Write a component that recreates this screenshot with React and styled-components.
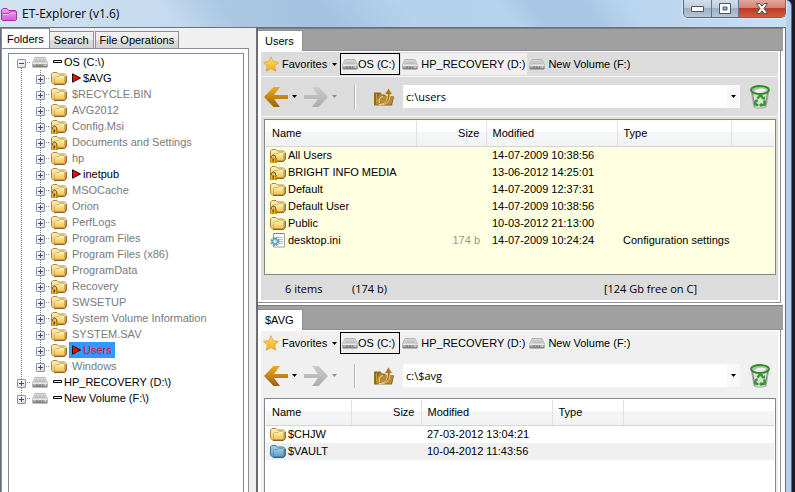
import { useState } from "react";
import styled, { createGlobalStyle, css } from "styled-components";

const GlobalStyle = createGlobalStyle`
  * {
    box-sizing: border-box;
  }

  body {
    margin: 0;
    background: #1b1a2c;
    font-family: "Liberation Sans", Arial, sans-serif;
    font-size: 11px;
    color: #000;
  }

  button, input {
    font: inherit;
    color: inherit;
    border: none;
    padding: 0;
    margin: 0;
    background: none;
  }

  svg {
    display: block;
    flex-shrink: 0;
  }

  ul {
    list-style: none;
    margin: 0;
    padding: 0;
  }
`;

const StyledWindow = styled.div`
  display: flex;
  flex-direction: column;
  height: 100vh;
  margin-right: 3px;
  padding-right: 5px;
  border-top-right-radius: 6px;
  background: #b4d0ea;
  border-right: 1px solid #5c6a7a;
`;

const StyledTitleBar = styled.header`
  display: flex;
  align-items: flex-start;
  justify-content: space-between;
  height: 27px;
  flex-shrink: 0;
  background:
    linear-gradient(50deg, transparent 0 22%, rgba(150, 182, 214, 0.5) 30% 42%, transparent 52% 64%, rgba(150, 182, 214, 0.4) 68% 74%, transparent 80%),
    linear-gradient(90deg, #d3e3f2 0, #c6dbef 20%, #b5d1ed 40%, #b5d2ee 75%, #c9def2 100%);

  h1 {
    display: flex;
    align-items: center;
    gap: 5px;
    margin: 0;
    padding-left: 1px;
    height: 27px;
    font: 400 12px "Open Sans", "Noto Sans", sans-serif;
  }
`;

const StyledWindowControls = styled.div`
  display: flex;
  height: 18px;
  border: 1px solid #59677a;
  border-top: none;
  border-radius: 0 0 5px 5px;
  overflow: hidden;
  box-shadow: 0 0 0 1px #dce9f6;
`;

const StyledWindowButton = styled.button`
  display: flex;
  align-items: center;
  justify-content: center;
  width: ${(p) => (p.$close ? "47px" : "27px")};
  border-left: ${(p) => (p.$first ? "none" : "1px solid #66758a")};
  background: ${(p) =>
    p.$close
      ? "linear-gradient(#e3a79b 0, #d68272 45%, #bd3a23 50%, #cf5b3c 100%)"
      : "linear-gradient(#d3dde9 0, #c0cddc 45%, #9fb0c5 50%, #b4c6da 100%)"};
`;

const StyledBody = styled.div`
  display: flex;
  flex: 1;
  min-height: 0;
  border: 1px solid #66727f;
  border-bottom: none;
  background: #f0f0f0;
`;

const StyledSidebar = styled.aside`
  display: flex;
  flex-direction: column;
  flex: 0 0 248px;
`;

const StyledTabs = styled.div`
  display: flex;
  align-items: flex-end;
  height: 20px;
  flex-shrink: 0;
`;

const StyledTab = styled.button`
  height: 17px;
  padding: 0 4px;
  border: 1px solid #8c8e9c;
  border-bottom: none;
  border-left-width: ${(p) => (p.$joined ? "0" : "1px")};
  margin-right: 1px;
  background: linear-gradient(#f2f2f2 0, #ebebeb 50%, #dcdcdc 51%, #d2d2d2 100%);
  line-height: 16px;

  ${(p) =>
    p.$active &&
    css`
      height: 20px;
      padding: 0 5px;
      margin-right: 0;
      background: #fff;
    `}
`;

const StyledTabPage = styled.div`
  display: flex;
  flex: 1;
  min-height: 0;
  padding: 4px 4px 0 6px;
  border: 1px solid #8c8e9c;
  border-bottom: none;
  background: #fff;
`;

const StyledTree = styled.ul`
  flex: 1;
  padding-left: 3px;
  border: 1px solid #828790;
  border-bottom: none;
  overflow: hidden;
`;

const StyledNode = styled.li`
  display: flex;
  align-items: center;
  height: 16px;

  > svg {
    margin-left: 1px;
  }
`;

const dots = (dir) =>
  `repeating-linear-gradient(${dir}, #808080 0 1px, transparent 1px 2px)`;

const railLines = {
  full: `${dots("180deg")} 9px 0 / 1px 16px no-repeat`,
  top: `${dots("180deg")} 9px 0 / 1px 8px no-repeat`,
  bottom: `${dots("180deg")} 9px 8px / 1px 8px no-repeat`,
};

const StyledRail = styled.span`
  display: flex;
  align-items: center;
  justify-content: center;
  width: 19px;
  height: 16px;
  flex-shrink: 0;
  background: ${(p) => railLines[p.$line]}${(p) =>
    p.$branch ? `, ${dots("90deg")} 9px 8px / 10px 1px no-repeat` : ""};
`;

const StyledExpander = styled.button`
  display: flex;
  width: 9px;
  height: 9px;
  margin-top: 2px;
  border: 1px solid #919191;
  border-radius: 1px;
  background: linear-gradient(135deg, #fff, #dcdcdc);
`;

const StyledLabel = styled.button`
  display: flex;
  align-items: center;
  gap: 2px;
  height: 16px;
  margin-left: 2px;
  padding: 0 3px;
  line-height: 15px;
  white-space: nowrap;
  color: ${(p) => (p.$selected ? "#f0002c" : p.$strong ? "#000" : "#7a7a7a")};
  background: ${(p) => (p.$selected ? "#3399ff" : "none")};
`;

const StyledPanes = styled.main`
  display: flex;
  flex-direction: column;
  flex: 1;
  min-width: 0;
  margin-left: 7px;
  border-left: 2px solid #6d6e73;
  background: #fff;
`;

const StyledPane = styled.section`
  display: flex;
  flex-direction: column;
  flex: ${(p) => (p.$grow ? "1" : "none")};
  min-height: 0;
`;

const StyledPaneTabs = styled.div`
  display: flex;
  align-items: flex-end;
  height: ${(p) => (p.$tall ? "25px" : "23px")};
  margin-right: 2px;
  border-top: 1px solid #7d7d7d;
  border-bottom: 1px solid #8c8e9c;
  background: #a0a0a0;

  button {
    height: 21px;
    min-width: 45px;
    padding: 0 7px;
    border: 1px solid #8c8e9c;
    border-bottom: none;
    border-left: none;
    background: #fff;
    text-align: left;
    line-height: 18px;
    margin-bottom: -1px;
  }
`;

const StyledPaneBody = styled.div`
  display: flex;
  flex-direction: column;
  flex: 1;
  min-height: 0;
  margin: 0 4px ${(p) => (p.$grow ? "0" : "2px")} 0;
  padding: 1px 2px ${(p) => (p.$grow ? "0" : "2px")} 3px;
  border: 1px solid #8c8e9c;
  border-width: 0 1px ${(p) => (p.$grow ? "0" : "1px")} 0;
  background: ${(p) => (p.$active ? "#dcdcdc" : "#f0f0f0")} content-box;
`;

const StyledDriveBar = styled.div`
  display: flex;
  align-items: center;
  height: 25px;
  flex-shrink: 0;
  border-bottom: 1px solid ${(p) => (p.$active ? "#f6f6f6" : "#f0f0f0")};
`;

const StyledFavorites = styled.button`
  display: flex;
  align-items: center;
  gap: 3px;
  width: 79px;
  height: 22px;
  padding-left: 2px;
`;

const StyledDrive = styled.button`
  display: flex;
  align-items: center;
  gap: ${(p) => (p.$current ? "0" : "3px")};
  height: 22px;
  padding: 0 ${(p) => (p.$current ? "4px" : "2px")} 0 1px;
  margin-right: 1px;
  border: ${(p) => (p.$current ? "1px solid #000" : "none")};
  background: ${(p) => (p.$lit ? "#f0f0f0" : "none")};
  white-space: nowrap;
`;

const StyledNavBar = styled.div`
  display: flex;
  align-items: center;
  height: 40px;
  flex-shrink: 0;
  padding: 0 8px 0 3px;
  border-bottom: 1px solid ${(p) => (p.$active ? "#f6f6f6" : "#f0f0f0")};
`;

const StyledNavButton = styled.button`
  display: flex;
  align-items: center;
  gap: 4px;
  width: 40px;
  height: 24px;
`;

const StyledDivider = styled.span`
  width: 2px;
  height: 24px;
  margin: 0 18px 0 10px;
  border-left: 1px solid #b4b4b4;
  border-right: 1px solid #fff;
`;

const StyledPath = styled.div`
  display: flex;
  flex: 1;
  height: 23px;
  margin: 0 10px 0 9px;
  background: #fff;

  input {
    flex: 1;
    min-width: 0;
    padding: 0 3px;
    outline: none;
    font-family: "Open Sans", "Noto Sans", sans-serif;
  }

  button {
    display: flex;
    align-items: center;
    justify-content: center;
    width: 13px;
    background: #f8f8f8;
  }
`;

const StyledListBox = styled.div`
  flex: ${(p) => (p.$grow ? "1" : "none")};
  height: ${(p) => (p.$grow ? "auto" : "156px")};
  min-height: 0;
  margin: 2px 2px 0 3px;
  padding: 1px;
  border: 1px solid #828790;
  border-bottom-width: ${(p) => (p.$grow ? "0" : "1px")};
  overflow: hidden;
  background: ${(p) => (p.$active ? "#ffffe1" : "#fff")};
`;

const StyledTable = styled.table`
  width: 100%;
  table-layout: fixed;
  border-collapse: collapse;

  th {
    height: 25px;
    padding: 0 6px;
    border-right: 1px solid #dfe1e6;
    border-bottom: 1px solid #d5d5d5;
    background: linear-gradient(#fff 0 42%, #f5f6f8 44%, #f1f2f4 100%);
    font-weight: 400;
    text-align: left;
  }

  th:last-child {
    border-right: none;
  }

  td {
    height: 17px;
    padding: 0 6px;
    line-height: 16px;
    white-space: nowrap;
  }

  td:first-child {
    padding: 0 4px;
  }

  th:nth-child(2), td:nth-child(2) {
    text-align: right;
  }

  td:nth-child(2) {
    color: #9a9a8c;
  }
`;

const StyledRow = styled.tr`
  background: ${(p) => (p.$selected ? "#f0f0f0" : "none")};
`;

const StyledFile = styled.span`
  display: flex;
  align-items: center;
  gap: 2px;
  height: 17px;
`;

const StyledStatus = styled.footer`
  display: flex;
  height: 25px;
  flex-shrink: 0;
  padding: 0 81px 0 24px;
  font: 11px/28px "Open Sans", "Noto Sans", sans-serif;

  span:first-child {
    width: 67px;
  }

  span:last-child {
    margin-left: auto;
  }
`;

const StyledCaretBox = styled.span`
  display: flex;
  margin-left: 2px;
`;

const StyledDefs = styled.svg`
  position: absolute;
`;

const Gradients = () => (
  <StyledDefs width="0" height="0" aria-hidden="true">
    <defs>
      <linearGradient id="gold" x1="0" y1="0" x2="0" y2="1">
        <stop offset="0" stopColor="#fff6b8" />
        <stop offset="1" stopColor="#f0c24e" />
      </linearGradient>
      <linearGradient id="blue" x1="0" y1="0" x2="0" y2="1">
        <stop offset="0" stopColor="#a5cfe6" />
        <stop offset="1" stopColor="#5d9fc6" />
      </linearGradient>
      <linearGradient id="pink" x1="0" y1="0" x2="0" y2="1">
        <stop offset="0" stopColor="#f7a6f4" />
        <stop offset="1" stopColor="#d457dc" />
      </linearGradient>
      <linearGradient id="back" x1="0" y1="0" x2="0" y2="1">
        <stop offset="0" stopColor="#f2a91c" />
        <stop offset="1" stopColor="#9a6208" />
      </linearGradient>
      <linearGradient id="forward" x1="0" y1="0" x2="0" y2="1">
        <stop offset="0" stopColor="#cbcbcb" />
        <stop offset="1" stopColor="#acacac" />
      </linearGradient>
      <linearGradient id="star" x1="0" y1="0" x2="0" y2="1">
        <stop offset="0" stopColor="#ffe476" />
        <stop offset="1" stopColor="#f5a90e" />
      </linearGradient>
      <linearGradient id="drive" x1="0" y1="0" x2="0" y2="1">
        <stop offset="0" stopColor="#dedede" />
        <stop offset="1" stopColor="#9a9a9a" />
      </linearGradient>
    </defs>
  </StyledDefs>
);

const FolderIcon = ({ tone = "gold", locked }) => {
  const edge = tone === "gold" ? "#b5853a" : "#3f7699";
  return (
    <svg width="16" height="16" viewBox="0 0 16 16" aria-hidden="true">
      <path d="M.5 12V4L2 2.500h4L7.500 4h6L15 5.500V12L13.500 14H2.500Z" fill={`url(#${tone})`} stroke={edge} />
      <path d="M3.500 13V7.500L4.500 6.500H8l1.500-1H12.500L13.500 6.500V12L12.500 13.500H4Z" fill={`url(#${tone})`} stroke={edge} strokeOpacity=".6" strokeWidth=".8" />
      <path d="M15.300 6v6.500L13.500 14.500H3" fill="none" stroke={tone === "gold" ? "#7a5522" : "#2c5672"} strokeWidth=".9" />
      {locked && (
        <g>
          <path d="M1.500 11V10a2 2 0 0 1 4 0V11" fill="none" stroke="#6a5426" />
          <path d="M0 11h7V16H0Z" fill="#c88908" />
          <path d="M1.500 11v5M4.500 11v5" stroke="#f2b21c" />
          <path d="M3 12h1v2H3Z" fill="#5e3f06" />
        </g>
      )}
    </svg>
  );
};

const AppIcon = () => (
  <svg width="16" height="16" viewBox="0 0 16 16" aria-hidden="true">
    <path d="M.5 13.500V4L2 2.500h4L7.500 4.500h7L15.500 6v7.500L14.500 14.500h-13Z" fill="url(#pink)" stroke="#a1359f" />
    <path d="M1.500 7.500h6l1.500-1.500h6" fill="none" stroke="#b83cb8" />
    <path d="M2 8.500h6l1.500-1.500h5" fill="none" stroke="#fbc8f8" />
  </svg>
);

const DriveIcon = () => (
  <svg width="16" height="16" viewBox="0 0 16 16" aria-hidden="true">
    <path d="M3 3.500h10L15.500 9v4H.5V9Z" fill="url(#drive)" stroke="#a8a8a8" strokeWidth=".8" />
    <path d="M3.200 4h9.600L15 8.800H1Z" fill="#d5d5d5" />
    <path d="M3 6h10M2.500 7.500h11" stroke="#bcbcbc" />
    <path d="M.5 9.300h15" stroke="#f4f4f4" />
    <path d="M1 12.800h14" stroke="#777" />
    <path d="M4 11.200h7" stroke="#6c6c6c" strokeDasharray="2 1" />
    <path d="M12.500 11.200h1.500" stroke="#e8e8e8" />
  </svg>
);

const IniIcon = () => (
  <svg width="16" height="16" viewBox="0 0 16 16" aria-hidden="true">
    <path d="M3.500 1.500h11v13.500h-11Z" fill="#fff" stroke="#9aa2aa" />
    <path d="M4 1.500h10" stroke="#666" strokeDasharray="1 1" />
    <path d="M6 5.500h7M8 7.500h5M9 9.500h4M9 11.500h4" stroke="#b7bfc6" />
    <circle cx="5" cy="9.500" r="3.500" fill="none" stroke="#5a97a8" strokeWidth="2" strokeDasharray="1.800 .95" />
    <circle cx="5" cy="9.500" r="2.700" fill="#a7d3de" stroke="#5a97a8" />
    <circle cx="5" cy="9.500" r="1" fill="#fff" />
  </svg>
);

const StarIcon = () => (
  <svg width="16" height="16" viewBox="0 0 16 16" aria-hidden="true">
    <path d="M8 .8l2.200 4.900 5.300.6-3.900 3.600 1.100 5.300L8 12.600l-4.700 2.600 1.100-5.300L.5 6.300l5.300-.6Z" fill="url(#star)" stroke="#dfa02a" strokeWidth=".8" strokeLinejoin="round" />
  </svg>
);

const Caret = ({ color = "#000" }) => (
  <svg width="5" height="3" viewBox="0 0 5 3" aria-hidden="true">
    <path d="M0 0h5L2.500 3Z" fill={color} />
  </svg>
);

const ArrowIcon = ({ forward }) => (
  <svg width="24" height="20" viewBox="0 0 24 20" aria-hidden="true">
    <path
      d={forward
        ? "M0 8h14L8 0h6.500L24 10l-9.500 10H8l6-8H0Z"
        : "M24 8H10l6-8H9.500L0 10l9.500 10H16l-6-8h14Z"}
      fill={`url(#${forward ? "forward" : "back"})`}
    />
  </svg>
);

const UpIcon = () => (
  <svg width="20" height="20" viewBox="0 0 20 20" aria-hidden="true">
    <path d="M0 18.500V5.500h6.500l1.500 2h3l1 1.500h7l1 1-2 8.500Z" fill="#94691a" />
    <path d="M1.500 17.500l3-8.500h15l-2.500 8.500Z" fill="#b98a30" />
    <path d="M2.500 7v8M5 8h4" stroke="#c89c48" />
    <path d="M5 17.500c6.500 0 8.500-4 8.500-10h-3L14.500 1l4 6.500h-2.500c0 7-3 10.500-11 10.500Z" fill="#a8771d" stroke="#ecdcb8" strokeWidth=".8" />
    <path d="M5.500 16c-1-3 0-5.500 3.500-6.500" fill="none" stroke="#ecdcb8" />
  </svg>
);

const RecycleIcon = () => (
  <svg width="20" height="24" viewBox="0 0 20 24" aria-hidden="true">
    <path d="M1 5l3 17c2 1.600 10 1.600 12 0L19 5Z" fill="#dedede" stroke="#9c9c9c" strokeWidth=".8" />
    <path d="M2.500 8l2.300 13.500M17.500 8l-2.300 13.500" stroke="#878787" strokeWidth="1.200" />
    <ellipse cx="10" cy="5" rx="9" ry="4" fill="#b4b9b1" stroke="#2e8b22" strokeWidth="1.800" />
    <path d="M4 6.500c3-3 8-4 12-2-1 3.500-8 4.500-12 2Z" fill="#f1f1f1" />
    <g fill="none" stroke="#2f9a28" strokeWidth="2.400">
      <path d="M7.500 13.500L9.500 11h2l1.500 2.500" />
      <path d="M14 15.500l1 2.500-1.500 2H11" />
      <path d="M8.500 20H6.500L5 18l1.200-2.500" />
    </g>
    <path d="M11.500 14.500h3.500v-3.500ZM11.500 17.500v5L9 20ZM4.500 15.500l3-1.500.5 3Z" fill="#2f9a28" />
  </svg>
);

const Flag = () => (
  <svg width="9" height="10" viewBox="0 0 9 10" aria-hidden="true">
    <path d="M.5 .8v8.400L8.500 5Z" fill="#f00" stroke="#000" strokeWidth=".9" />
  </svg>
);

const Dash = () => (
  <svg width="9" height="4" viewBox="0 0 9 4" aria-hidden="true">
    <path d="M.5 .5h8v2h-8Z" fill="#fff" stroke="#000" />
  </svg>
);

const Sign = ({ open }) => (
  <svg width="7" height="7" viewBox="0 0 7 7" aria-hidden="true">
    <path d={open ? "M1 3.500h5" : "M1 3.500h5M3.500 1v5"} stroke="#2b4b9b" />
  </svg>
);

const folders = [
  { name: "$AVG", flag: true },
  { name: "$RECYCLE.BIN" },
  { name: "AVG2012" },
  { name: "Config.Msi", locked: true },
  { name: "Documents and Settings", locked: true },
  { name: "hp" },
  { name: "inetpub", flag: true },
  { name: "MSOCache", locked: true },
  { name: "Orion" },
  { name: "PerfLogs" },
  { name: "Program Files" },
  { name: "Program Files (x86)" },
  { name: "ProgramData" },
  { name: "Recovery", locked: true },
  { name: "SWSETUP" },
  { name: "System Volume Information", locked: true },
  { name: "SYSTEM.SAV" },
  { name: "Users", flag: true },
  { name: "Windows" },
];

const usersFiles = [
  { name: "All Users", modified: "14-07-2009 10:38:56", locked: true },
  { name: "BRIGHT INFO MEDIA", modified: "13-06-2012 14:25:01", locked: true },
  { name: "Default", modified: "14-07-2009 12:37:31" },
  { name: "Default User", modified: "14-07-2009 10:38:56", locked: true },
  { name: "Public", modified: "10-03-2012 21:13:00" },
  { name: "desktop.ini", size: "174 b", modified: "14-07-2009 10:24:24", type: "Configuration settings", file: true },
];

const avgFiles = [
  { name: "$CHJW", modified: "27-03-2012 13:04:21" },
  { name: "$VAULT", modified: "10-04-2012 11:43:56", selected: true },
];

const DriveNode = ({ name, line, open, onToggle }) => (
  <StyledNode>
    <StyledRail $line={line} $branch>
      <StyledExpander aria-label={`Toggle ${name}`} onClick={onToggle}>
        <Sign open={open} />
      </StyledExpander>
    </StyledRail>
    <DriveIcon />
    <StyledLabel $strong>
      <Dash />
      {name}
    </StyledLabel>
  </StyledNode>
);

const FolderTree = () => {
  const [open, setOpen] = useState(true);
  const [selected, setSelected] = useState("Users");

  return (
    <StyledTree>
      <DriveNode name="OS (C:\)" line="bottom" open={open} onToggle={() => setOpen(!open)} />
      {open &&
        folders.map((it, idx) => (
          <StyledNode key={it.name}>
            <StyledRail $line="full" />
            <StyledRail $line={idx === folders.length - 1 ? "top" : "full"} $branch>
              <StyledExpander aria-label={`Toggle ${it.name}`}>
                <Sign />
              </StyledExpander>
            </StyledRail>
            <FolderIcon locked={it.locked} />
            <StyledLabel
              $strong={it.flag}
              $selected={selected === it.name}
              onClick={() => setSelected(it.name)}
            >
              {it.flag && <Flag />}
              {it.name}
            </StyledLabel>
          </StyledNode>
        ))}
      <DriveNode name="HP_RECOVERY (D:\)" line="full" />
      <DriveNode name="New Volume (F:\)" line="top" />
    </StyledTree>
  );
};

const FileTable = ({ files, nameWidth, typeWidth }) => (
  <StyledTable>
    <colgroup>
      <col style={{ width: nameWidth }} />
      <col style={{ width: 70 }} />
      <col style={{ width: 131 }} />
      <col style={{ width: typeWidth }} />
      <col />
    </colgroup>
    <thead>
      <tr>
        <th>Name</th>
        <th>Size</th>
        <th>Modified</th>
        <th>Type</th>
        <th aria-label="Empty" />
      </tr>
    </thead>
    <tbody>
      {files.map((it) => (
        <StyledRow key={it.name} $selected={it.selected}>
          <td>
            <StyledFile>
              {it.file ? <IniIcon /> : <FolderIcon locked={it.locked} tone={it.selected ? "blue" : "gold"} />}
              {it.name}
            </StyledFile>
          </td>
          <td>{it.size}</td>
          <td>{it.modified}</td>
          <td>{it.type}</td>
          <td />
        </StyledRow>
      ))}
    </tbody>
  </StyledTable>
);

const Pane = ({ title, startPath, active, grow, files, nameWidth, typeWidth, children }) => {
  const [path, setPath] = useState(startPath);

  return (
    <StyledPane $grow={grow}>
      <StyledPaneTabs $tall={grow}>
        <button>{title}</button>
      </StyledPaneTabs>
      <StyledPaneBody $active={active} $grow={grow}>
        <StyledDriveBar $active={active}>
          <StyledFavorites>
            <StarIcon />
            Favorites
            <StyledCaretBox>
              <Caret />
            </StyledCaretBox>
          </StyledFavorites>
          <StyledDrive $current $lit>
            <DriveIcon />
            OS (C:)
          </StyledDrive>
          <StyledDrive $lit>
            <DriveIcon />
            HP_RECOVERY (D:)
          </StyledDrive>
          <StyledDrive>
            <DriveIcon />
            New Volume (F:)
          </StyledDrive>
        </StyledDriveBar>
        <StyledNavBar $active={active}>
          <StyledNavButton aria-label="Back">
            <ArrowIcon />
            <Caret />
          </StyledNavButton>
          <StyledNavButton aria-label="Forward">
            <ArrowIcon forward />
            <Caret color="#8f8f8f" />
          </StyledNavButton>
          <StyledDivider />
          <button aria-label="Up one level">
            <UpIcon />
          </button>
          <StyledPath>
            <input aria-label="Path" value={path} onChange={(e) => setPath(e.target.value)} />
            <button aria-label="Recent paths">
              <Caret />
            </button>
          </StyledPath>
          <button aria-label="Recycle bin">
            <RecycleIcon />
          </button>
        </StyledNavBar>
        <StyledListBox $active={active} $grow={grow}>
          <FileTable files={files} nameWidth={nameWidth} typeWidth={typeWidth} />
        </StyledListBox>
        {children}
      </StyledPaneBody>
    </StyledPane>
  );
};

const App = () => {
  return (
    <>
      <GlobalStyle />
      <Gradients />
      <StyledWindow>
        <StyledTitleBar>
          <h1>
            <AppIcon />
            ET-Explorer (v1.6)
          </h1>
          <StyledWindowControls>
            <StyledWindowButton $first aria-label="Minimize">
              <svg width="13" height="6" viewBox="0 0 13 6">
                <path d="M.5 .5h12v5h-12Z" fill="#fff" stroke="#4d5563" />
              </svg>
            </StyledWindowButton>
            <StyledWindowButton aria-label="Maximize">
              <svg width="12" height="11" viewBox="0 0 12 11">
                <path d="M.5 .5h11v10h-11Z M4 4v3h4V4Z" fill="#fff" fillRule="evenodd" stroke="#4d5563" />
              </svg>
            </StyledWindowButton>
            <StyledWindowButton $close aria-label="Close">
              <svg width="12" height="11" viewBox="0 0 12 11">
                <path d="M.5 .5h3.500l2 2.700 2-2.700h3.500L8 5.500l3.500 5H8L6 7.800l-2 2.700H.5l3.500-5Z" fill="#fff" stroke="#4d5563" />
              </svg>
            </StyledWindowButton>
          </StyledWindowControls>
        </StyledTitleBar>
        <StyledBody>
          <StyledSidebar>
            <StyledTabs>
              <StyledTab $active>Folders</StyledTab>
              <StyledTab $joined>Search</StyledTab>
              <StyledTab>File Operations</StyledTab>
            </StyledTabs>
            <StyledTabPage>
              <FolderTree />
            </StyledTabPage>
          </StyledSidebar>
          <StyledPanes>
            <Pane title="Users" startPath="c:\users" active files={usersFiles} nameWidth={150} typeWidth={114}>
              <StyledStatus>
                <span>6 items</span>
                <span>(174 b)</span>
                <span>[124 Gb free on C]</span>
              </StyledStatus>
            </Pane>
            <Pane title="$AVG" startPath="c:\$avg" grow files={avgFiles} nameWidth={85} typeWidth={71} />
          </StyledPanes>
        </StyledBody>
      </StyledWindow>
    </>
  );
};

export default App;
